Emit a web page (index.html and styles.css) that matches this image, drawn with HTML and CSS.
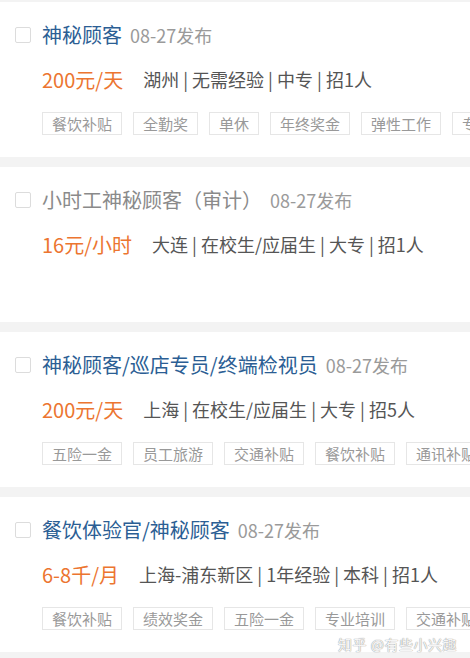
FILE: index.html
```html
<!DOCTYPE html>
<html lang="zh-CN">
<head>
<meta charset="utf-8">
<title>职位列表</title>
<link rel="stylesheet" href="styles.css">
</head>
<body>
<div class="list">
  <div class="card">
    <div class="row title-row">
      <span class="check"></span>
      <span class="title">神秘顾客</span>
      <span class="date">08-27发布</span>
    </div>
    <div class="row salary-row">
      <span class="salary">200元/天</span>
      <span class="info">湖州 | 无需经验 | 中专 | 招1人</span>
    </div>
    <div class="tags">
      <span class="tag">餐饮补贴</span>
      <span class="tag">全勤奖</span>
      <span class="tag">单休</span>
      <span class="tag">年终奖金</span>
      <span class="tag">弹性工作</span>
      <span class="tag">专业培训</span>
    </div>
  </div>

  <div class="card">
    <div class="row title-row">
      <span class="check"></span>
      <span class="title visited">小时工神秘顾客（审计）</span>
      <span class="date">08-27发布</span>
    </div>
    <div class="row salary-row">
      <span class="salary">16元/小时</span>
      <span class="info">大连 | 在校生/应届生 | 大专 | 招1人</span>
    </div>
  </div>

  <div class="card">
    <div class="row title-row">
      <span class="check"></span>
      <span class="title">神秘顾客/巡店专员/终端检视员</span>
      <span class="date">08-27发布</span>
    </div>
    <div class="row salary-row">
      <span class="salary">200元/天</span>
      <span class="info">上海 | 在校生/应届生 | 大专 | 招5人</span>
    </div>
    <div class="tags">
      <span class="tag">五险一金</span>
      <span class="tag">员工旅游</span>
      <span class="tag">交通补贴</span>
      <span class="tag">餐饮补贴</span>
      <span class="tag">通讯补贴</span>
    </div>
  </div>

  <div class="card">
    <div class="row title-row">
      <span class="check"></span>
      <span class="title">餐饮体验官/神秘顾客</span>
      <span class="date">08-27发布</span>
    </div>
    <div class="row salary-row">
      <span class="salary">6-8千/月</span>
      <span class="info">上海-浦东新区 | 1年经验 | 本科 | 招1人</span>
    </div>
    <div class="tags">
      <span class="tag">餐饮补贴</span>
      <span class="tag">绩效奖金</span>
      <span class="tag">五险一金</span>
      <span class="tag">专业培训</span>
      <span class="tag">交通补贴</span>
    </div>
  </div>
</div>
<div class="watermark">知乎 @有些小兴趣</div>
</body>
</html>
```

FILE: styles.css
```css
html, body {
  margin: 0;
  padding: 0;
}
body {
  background: #f3f3f3;
  font-family: "Noto Sans CJK SC", "Noto Sans", sans-serif;
  width: 470px;
  height: 658px;
  overflow: hidden;
  position: relative;
}
.list {
  display: flex;
  flex-direction: column;
  gap: 10px;
  padding-top: 2px;
}
.card {
  background: #fff;
  height: 155px;
  box-sizing: border-box;
  padding: 19px 0 0 15px;
  overflow: hidden;
}
.row {
  display: flex;
  align-items: center;
  white-space: nowrap;
  height: 28px;
}
.check {
  width: 14px;
  height: 14px;
  border: 1px solid #dcdcdc;
  border-radius: 2px;
  margin-right: 11px;
  flex: none;
}
.title {
  font-size: 20px;
  color: #2b5e94;
  line-height: 28px;
}
.title.visited {
  color: #8a8a8a;
}
.date {
  font-size: 18px;
  color: #9a9a9a;
  margin-left: 8px;
  line-height: 28px;
}
.salary-row {
  margin-top: 16px;
  padding-left: 27px;
}
.salary {
  font-size: 20px;
  color: #ec7530;
  margin-right: 20px;
}
.info {
  font-size: 18px;
  color: #555;
}
.tags {
  display: flex;
  gap: 11px;
  margin-top: 19px;
  padding-left: 27px;
  white-space: nowrap;
}
.tag {
  flex: none;
  font-size: 15px;
  line-height: 21px;
  color: #999;
  border: 1px solid #e6e6e6;
  padding: 0 9px;
}
.watermark {
  position: absolute;
  right: 13px;
  bottom: 4px;
  font-size: 14px;
  line-height: 20px;
  color: rgba(255, 255, 255, 0.92);
  text-shadow: 0 0 1px #9a9a9a, 0 0 1px #9a9a9a;
  letter-spacing: 0.5px;
}
```
